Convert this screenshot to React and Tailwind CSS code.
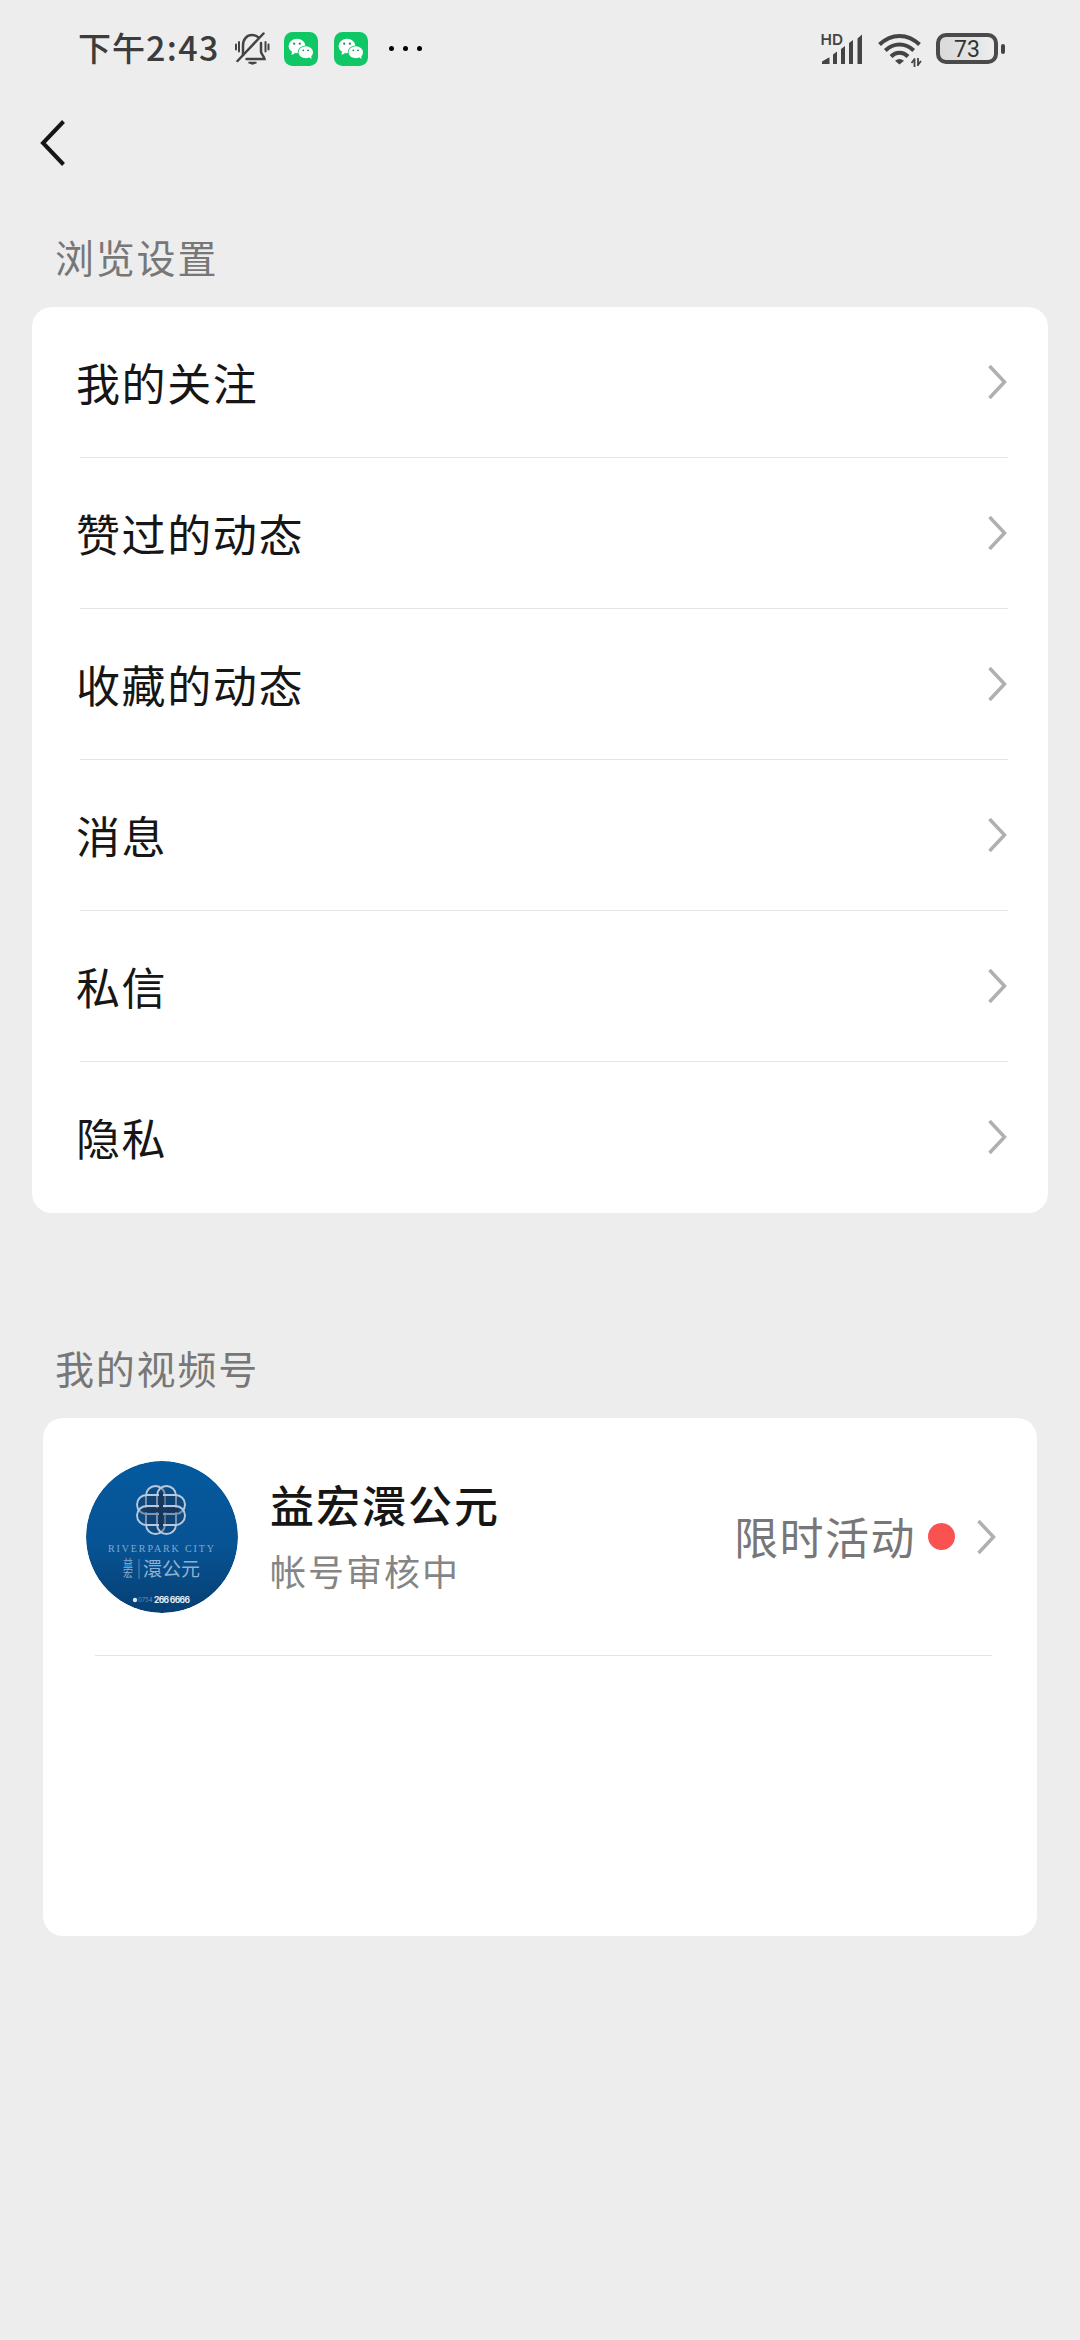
import React from "react";

const browseItems = ["我的关注", "赞过的动态", "收藏的动态", "消息", "私信", "隐私"];

function BellOff() {
  return (
    <svg className="ml-[14px] h-9 w-9 shrink-0" viewBox="0 0 36 36" fill="none" stroke="#444" strokeWidth="2.5" strokeLinecap="round">
      <path d="M9 24V14.500C9 8 13 4 18 4c2.600 0 4.500.8 6 2.200" />
      <path d="M27 12v8.500c0 2.500 3 4.500 3.500 7.500H12.500" />
      <path d="M29.500 2.500 3.500 30" />
      <path d="M14.500 31.500h8l-4 1.500z" fill="#444" strokeWidth="1.500" />
      <path d="M5 11v9.500M2 13.500v5M31.500 11v9.500M34.500 13.500v5" strokeWidth="2" />
    </svg>
  );
}

function WeChat({ className }) {
  return (
    <svg className={`h-[34px] w-[34px] shrink-0 ${className}`} viewBox="0 0 34 34">
      <rect width="34" height="34" rx="8.500" fill="#10c765" />
      <ellipse cx="13" cy="14" rx="8.500" ry="7.200" fill="#fff" />
      <path d="m8 19-.5 4 4-2z" fill="#fff" />
      <ellipse cx="21.800" cy="20.200" rx="8" ry="6.800" fill="#10c765" />
      <ellipse cx="21.800" cy="20.200" rx="7.200" ry="6" fill="#fff" />
      <path d="m25 25 2.500 2-.3-3.500z" fill="#fff" />
      <g fill="#0a8f55">
        <circle cx="10.200" cy="11.700" r="1.100" />
        <circle cx="15.800" cy="11.700" r="1.100" />
        <circle cx="19.300" cy="18.300" r=".9" />
        <circle cx="24" cy="18.300" r=".9" />
      </g>
    </svg>
  );
}

function Signal() {
  return (
    <svg className="h-9 w-[42px] shrink-0" viewBox="0 0 42 36" fill="#444">
      <text x="-.5" y="13.500" fontSize="15" fontWeight="600" fontFamily="Inter, sans-serif" textLength="22.500" lengthAdjust="spacingAndGlyphs">HD</text>
      <path d="M1 33v-2.500l6.500-3.800q1-.5 1 .5V33zM12 33v-9.500l4-3V33zM20 33V18l4-3v18zM28 33V12l4-3v24zM36.500 33V7.500l4.500-4V33z" />
    </svg>
  );
}

function Wifi() {
  return (
    <svg className="ml-[15px] h-9 w-[44px] shrink-0" viewBox="0 0 44 36" fill="none" stroke="#444" strokeWidth="4">
      <path d="M1.500 13.500C13.500 2 29.500 2 41.500 13.500" />
      <path d="M7.300 19.500c8.500-8 20-8 28.400 0" />
      <path d="M13 25.500c5-5 12-5 17 0" />
      <path d="M21.500 33.500 17 29.800q4.500-3.800 9 0z" fill="#444" stroke="none" />
      <path d="M36.500 27.500v8.500M40 27v8M37 27.500l-3.500 4.500M39.500 34.500l3.500-4.500" strokeWidth="1.800" />
    </svg>
  );
}

function Battery() {
  return (
    <div className="ml-[14px] flex shrink-0 items-center gap-[3px]">
      <div className="flex h-[31px] w-[62px] items-center justify-center rounded-[10px] border-4 border-[#4a4a4a] bg-gradient-to-r from-[#dadada] via-[#e2e2e2] to-[#ededed] pt-[2px] font-['Roboto',sans-serif] text-[23px] leading-none text-[#333]">
        73
      </div>
      <div className="h-[10px] w-[4px] rounded-full bg-[#444]" />
    </div>
  );
}

function StatusBar() {
  return (
    <header className="flex h-24 items-center justify-between pt-px pr-[75px] pl-[78px]">
      <div className="flex items-center">
        <span className="pb-[4px] text-[33px] leading-9 font-medium tracking-[1px] text-[#3c3c3c]">
          下午<span className="text-[34px] tracking-[1.400px]">2:43</span>
        </span>
        <BellOff />
        <WeChat className="ml-[14px]" />
        <WeChat className="ml-4" />
        <div className="ml-[21px] flex gap-[8.500px]">
          <i className="size-[5.500px] rounded-full bg-black" />
          <i className="size-[5.500px] rounded-full bg-black" />
          <i className="size-[5.500px] rounded-full bg-black" />
        </div>
      </div>
      <div className="flex items-center">
        <Signal />
        <Wifi />
        <Battery />
      </div>
    </header>
  );
}

function Chevron() {
  return (
    <svg className="h-[36px] w-[20px] shrink-0" viewBox="0 0 20 36" fill="none" stroke="#b0b0b0" strokeWidth="3.500">
      <path d="m1.500 2 15 16-15 16" />
    </svg>
  );
}

function Avatar() {
  return (
    <svg className="size-[152px] shrink-0 rounded-full" viewBox="0 0 152 152">
      <defs>
        <linearGradient id="sky" x1="0" y1="0" x2="0" y2="1">
          <stop offset="0" stopColor="#045a9f" />
          <stop offset=".55" stopColor="#075394" />
          <stop offset="1" stopColor="#063f72" />
        </linearGradient>
      </defs>
      <circle cx="76" cy="76" r="76" fill="url(#sky)" />
      <g fill="#16365c" fillOpacity=".35" stroke="#b9c8da" strokeWidth="1.900">
        <rect x="60" y="25" width="19" height="48" rx="9.500" />
        <rect x="71" y="25" width="19" height="48" rx="9.500" />
        <rect x="51" y="34" width="48" height="19" rx="9.500" />
        <rect x="51" y="45" width="48" height="19" rx="9.500" />
      </g>
      <path d="M75 32v34M58 49h34" stroke="#17365c" strokeWidth="4" />
      <text x="22" y="91" fontSize="10" fontFamily="Liberation Serif, serif" fill="#7fa9d0" textLength="106">RIVERPARK CITY</text>
      <g fill="#8fb0d0" fontFamily="Noto Sans CJK SC, sans-serif">
        <text x="42" y="97" fontSize="10" className="[writing-mode:vertical-rl]">益宏</text>
        <text x="57" y="115" fontSize="19" textLength="57">澴公元</text>
      </g>
      <path d="M53 98v20" stroke="#5c8ab8" strokeWidth="1" />
      <circle cx="49" cy="139" r="2.200" fill="#d5e6f5" />
      <text x="52" y="141" fontSize="6" fontFamily="Inter, sans-serif" fill="#5e8fc0">0754</text>
      <text x="68" y="142" fontSize="8.500" fontWeight="700" fontFamily="Inter, sans-serif" fill="#e1edf7" textLength="36">266 6666</text>
    </svg>
  );
}

export default function App() {
  return (
    <div className="min-h-[2340px] w-[1080px] bg-[#ededed] font-['Noto_Sans_CJK_SC',sans-serif]">
      <StatusBar />

      {/* Back */}
      <nav className="flex h-[94px] items-center pl-[39px]">
        <svg className="h-[48px] w-[28px]" viewBox="0 0 28 48" fill="none" stroke="#161616" strokeWidth="4">
          <path d="M24.500 2.500 4 24l20.500 21.500" />
        </svg>
      </nav>

      {/* Browse settings */}
      <h2 className="mt-[37px] pl-[55px] text-[39px] leading-[58px] tracking-[1.800px] text-[#777]">浏览设置</h2>
      <ul className="mx-8 mt-[22px] rounded-[20px] bg-white">
        {browseItems.map((label, i) => (
          <li
            key={label}
            className={`mr-10 ml-12 border-b ${i < browseItems.length - 1 ? "border-[#e4e4e4]" : "border-transparent"}`}>
            <div className="-ml-1 flex h-[150px] items-center justify-between">
              <span className="text-[44px] leading-[60px] tracking-[1.600px] text-[#161616]">{label}</span>
              <Chevron />
            </div>
          </li>
        ))}
      </ul>

      {/* My channel */}
      <h2 className="mt-[125px] pl-[55px] text-[39px] leading-[58px] tracking-[1.800px] text-[#777]">我的视频号</h2>
      <section className="mx-[43px] mt-[22px] h-[518px] rounded-[20px] bg-white">
        <div className="flex h-[237px] items-center pr-[40px] pl-[43px]">
          <Avatar />
          <div className="ml-[32px] flex-1 pb-[4px]">
            <div className="text-[44px] leading-[64px] font-medium tracking-[2px] text-[#161616]">益宏澴公元</div>
            <div className="mt-[7px] text-[36px] leading-[54px] tracking-[2px] text-[#858585]">帐号审核中</div>
          </div>
          <span className="pb-[2px] text-[44px] leading-[60px] tracking-[1.500px] text-[#777]">限时活动</span>
          <span className="mr-[22px] ml-[12px] size-[27px] rounded-full bg-[#fa5151]" />
          <Chevron />
        </div>
        <div className="mr-[45px] ml-[52px] h-px bg-[#dfe5e7]" />
      </section>
    </div>
  );
}
